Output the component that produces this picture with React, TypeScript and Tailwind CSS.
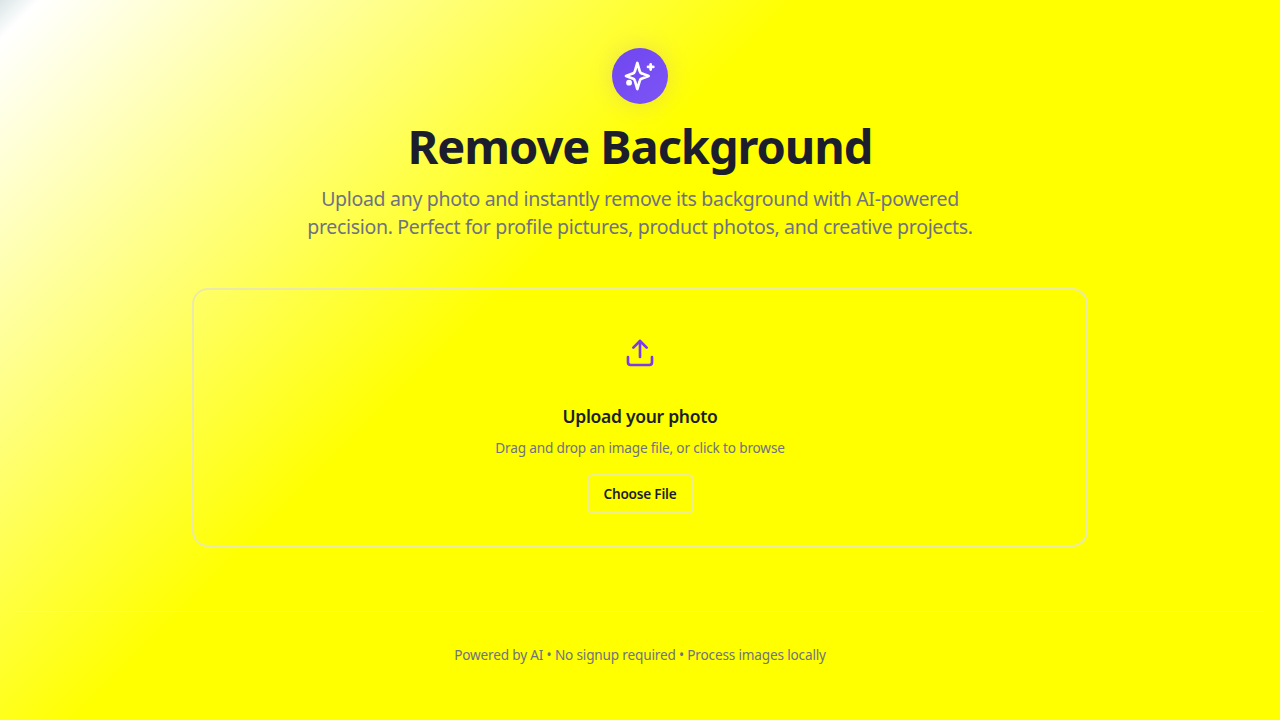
import { Upload } from 'lucide-react';

export default function App() {
  return (
    <div className="min-h-screen bg-[linear-gradient(135deg,#dbe5e6_0%,#ffffff_2%,#ffff00_40%)] px-4 font-['Noto_Sans',sans-serif]">
      <div className="flex flex-col items-center pt-12">
        <div className="flex h-14 w-14 items-center justify-center rounded-full bg-gradient-to-br from-[#7045f0] to-[#7c55f5] shadow-[0_0_24px_rgba(139,92,246,0.2)]">
          <svg viewBox="0 0 24 24" fill="none" stroke="currentColor" strokeWidth="2" strokeLinecap="round" strokeLinejoin="round" className="h-8 w-8 text-white">
            <path d="M10 2.2 11.8 8.4a2.5 2.5 0 0 0 1.8 1.8L18.5 12l-4.9 1.8a2.5 2.5 0 0 0-1.8 1.8L10 21.8l-1.8-6.2a2.5 2.5 0 0 0-1.8-1.8L1.5 12l4.9-1.8a2.5 2.5 0 0 0 1.8-1.8Z" />
            <path d="M20 3.2v4" />
            <path d="M22 5.2h-4" />
            <circle cx="3.8" cy="17" r="1.2" fill="currentColor" />
          </svg>
        </div>
        <h1 className="mt-4 text-[47px] leading-[52px] font-bold tracking-[-1.06px] text-[#1c1e2e]">Remove Background</h1>
        <p className="mt-[13px] max-w-[700px] text-center text-[19.5px] leading-7 tracking-[-0.31px] text-[#6f7280]">
          Upload any photo and instantly remove its background with AI-powered precision. Perfect for profile pictures, product photos, and creative projects.
        </p>
      </div>

      <div className="mx-auto mt-[47px] flex h-[259px] max-w-4xl flex-col items-center rounded-2xl border-2 border-[#ebeaa8] pt-[47px]">
        <Upload className="h-8 w-8 text-[#7c3aed]" />
        <h3 className="mt-[33px] text-[17.5px] leading-7 font-semibold tracking-[-0.3px] text-[#1c1e2e]">Upload your photo</h3>
        <p className="mt-2 text-[13.6px] leading-5 tracking-[-0.17px] text-[#6f7280]">Drag and drop an image file, or click to browse</p>
        <button className="mt-4 h-10 w-[107px] rounded-md border-2 border-[#eeee90] pt-px text-[13.6px] font-semibold tracking-[-0.2px] text-[#1c1e2e]">Choose File</button>
      </div>

      <footer className="mt-16 border-t border-[#f2f2f0] pt-[33px] text-center">
        <p className="text-[13.6px] leading-5 tracking-[-0.17px] text-[#6f7280]">Powered by AI • No signup required • Process images locally</p>
      </footer>
    </div>
  );
}
